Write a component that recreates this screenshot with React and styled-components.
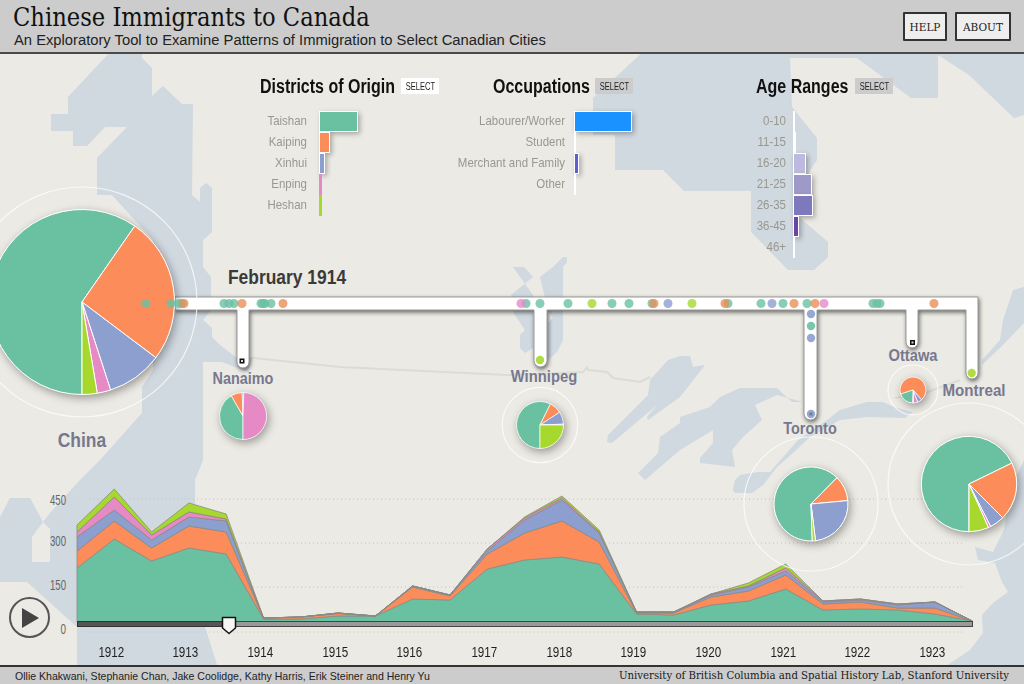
import React from "react";
import styled, { createGlobalStyle } from "styled-components";

const GOTHIC = `"Liberation Sans", sans-serif`;
const SLAB = `"DejaVu Serif Condensed", "DejaVu Serif", serif`;

const TEAL = "#6ac1a2";
const ORANGE = "#fc8d5a";
const BLUE = "#8d9fcf";
const PINK = "#e68ac6";
const GREEN = "#a6d82e";
const RAIL_ORANGE = "#e88f58";

const GlobalStyle = createGlobalStyle`
  html, body {
    margin: 0;
    padding: 0;
    background: #ebeae4;
  }
  #root {
    width: 1024px;
    height: 684px;
    overflow: hidden;
  }
`;

const Page = styled.div`
  display: flex;
  flex-direction: column;
  width: 1024px;
  height: 684px;
  font-family: "Liberation Sans", sans-serif;
`;

const Header = styled.header`
  display: flex;
  justify-content: space-between;
  align-items: flex-start;
  box-sizing: border-box;
  height: 54px;
  padding: 3px 13px 0 13px;
  background: #cccccc;
  border-bottom: 2px solid #4a4a4a;
`;

const Titles = styled.div`
  display: flex;
  flex-direction: column;
`;

const Title = styled.h1`
  margin: 0;
  font-family: ${SLAB};
  font-weight: 400;
  font-size: 25.2px;
  line-height: 29px;
  color: #111;
`;

const Subtitle = styled.p`
  margin: 0 0 0 1px;
  font-size: 14.76px;
  line-height: 17px;
  color: #222;
`;

const Nav = styled.nav`
  display: flex;
  gap: 8px;
  padding-top: 9px;
`;

const NavButton = styled.button`
  box-sizing: border-box;
  width: ${(p) => p.$width}px;
  height: 29px;
  padding: 0;
  background: #eeeeee;
  border: 2px solid #333;
  border-radius: 1px;
  font-family: "DejaVu Serif", serif;
  font-size: 10.5px;
  color: #222;
`;

const Stage = styled.main`
  position: relative;
  flex: 1;
  display: flex;
  flex-direction: column;
  justify-content: space-between;
  min-height: 0;
`;

const MapLayer = styled.svg`
  position: absolute;
  top: 0;
  left: 0;
  width: 1024px;
  height: 611px;
`;

const Filters = styled.section`
  position: relative;
  display: flex;
  padding: 21px 0 0 260px;
`;

const FilterPanel = styled.div`
  width: ${(p) => p.$width}px;
`;

const FilterHead = styled.div`
  display: flex;
  align-items: center;
  gap: ${(p) => p.$gap}px;
  height: 22px;
  margin-bottom: 14px;
`;

const FilterTitle = styled.h2`
  flex-shrink: 0;
  width: ${(p) => p.$width}px;
  margin: 0;
  font-family: ${GOTHIC};
  font-weight: 700;
  font-size: 19.5px;
  color: #111;
  white-space: nowrap;
  transform: scaleX(0.82);
  transform-origin: left center;
`;

const SelectButton = styled.button`
  display: flex;
  align-items: center;
  justify-content: center;
  width: 38px;
  height: 16px;
  padding: 0;
  border: 0;
  background: ${(p) => (p.$active ? "#ffffff" : "#cccccc")};
`;

const SelectText = styled.span`
  font-family: ${GOTHIC};
  font-size: 10.5px;
  color: #222;
  transform: scaleX(0.72);
`;

const FilterRow = styled.div`
  display: flex;
  align-items: stretch;
  height: 21px;
  gap: ${(p) => p.$gap}px;
`;

const RowLabel = styled.span`
  display: flex;
  justify-content: flex-end;
  align-items: center;
  box-sizing: border-box;
  width: ${(p) => p.$width}px;
  padding-bottom: 2px;
  font-family: ${GOTHIC};
  font-size: 13.5px;
  color: #98988f;
  white-space: nowrap;
  transform: scaleX(0.85);
  transform-origin: right center;
`;

const RowBar = styled.span`
  box-sizing: border-box;
  width: ${(p) => p.$width}px;
  background: ${(p) => p.$color};
  border: ${(p) => (p.$width > 3 ? "1px solid #fff" : "0")};
  box-shadow: ${(p) => (p.$width > 3 ? "2px 2px 5px rgba(0, 0, 0, 0.3)" : "none")};
`;

const Timeline = styled.section`
  position: relative;
`;

const ChartSvg = styled.svg`
  display: block;
  width: 1024px;
  height: 165px;
`;

const AxisText = styled.text`
  font-family: ${GOTHIC};
  font-size: 14px;
  fill: #666;
  text-anchor: end;
`;

const Years = styled.div`
  display: flex;
  box-sizing: border-box;
  height: 25px;
  padding: 4px 0 0 73.5px;
`;

const Year = styled.span`
  width: 74.7px;
  text-align: center;
  font-family: ${GOTHIC};
  font-size: 15.5px;
  line-height: 16px;
  color: #1f1f1f;
  transform: scaleX(0.75);
`;

const PlayButton = styled.button`
  position: absolute;
  left: 9px;
  top: 122px;
  width: 41px;
  height: 41px;
  padding: 0;
  border: 2px solid #555;
  border-radius: 50%;
  background: #ebeae4;
  display: flex;
  align-items: center;
  justify-content: center;
`;

const Overlay = styled.svg`
  position: absolute;
  top: 0;
  left: 0;
  width: 1024px;
  height: 611px;
  pointer-events: none;
`;

const Route = styled.path`
  fill: #ffffff;
  stroke: #999;
  stroke-width: 1;
  filter: drop-shadow(1px 2px 2px rgba(0, 0, 0, 0.55));
`;

const PieGroup = styled.g`
  filter: drop-shadow(2px 3px 4px rgba(0, 0, 0, 0.35));
`;

const MapLabel = styled.span`
  position: absolute;
  left: ${(p) => p.$x}px;
  top: ${(p) => p.$y}px;
  transform: translate(-50%, -50%) scaleX(${(p) => p.$scale});
  font-family: ${GOTHIC};
  font-weight: 700;
  font-size: ${(p) => p.$size}px;
  color: ${(p) => p.$color || "#77788e"};
  white-space: nowrap;
`;

const Footer = styled.footer`
  display: flex;
  justify-content: space-between;
  align-items: center;
  box-sizing: border-box;
  height: 19px;
  padding: 0 15px;
  background: #cccccc;
  border-top: 2px solid #333;
`;

const Credits = styled.span`
  font-size: 10.55px;
  color: #222;
`;

const Institution = styled.span`
  font-family: ${SLAB};
  font-size: 11.3px;
  color: #1a1a1a;
`;

const WATER = [
  "112,50 142,50 142,58 152,68 152,96 163,86 182,104 193,104 192,195 200,202 200,188 206,183 212,188 212,232 203,240 203,267 211,277 211,310 203,320 212,328 212,337 220,345 237,358 253,357 248,372 222,362 203,362 203,460 195,480 195,600 207,633 218,668 77,668 77,627 27,582 0,582 0,517 10,498 30,498 43,522 50,513 80,480 100,460 142,413 142,387 153,370 153,240 112,195 97,195 97,158 127,127 105,127 87,146 73,146 73,131 51,131 51,114 68,114 68,97",
  "645,50 593,98 593,135 615,135 615,170 663,170 684,191 751,191 751,232 788,270 814,270 828,257 828,242 799,217 812,200 809,172 817,160 817,138 792,107 790,58 857,58 911,98 938,98 938,55 969,75 1014,118 1024,115 1024,50",
  "513,267 524,267 533,277 511,295 513,312 525,330 520,335 520,348 525,353 533,348 533,295",
  "540,277 553,267 563,257 567,257 567,262 563,267 563,340 557,352 548,360 548,323 553,318 548,310",
  "668,360 650,380 648,395 608,435 607,442 612,443 657,405 647,417 648,420 680,397 705,365 693,367 690,356 680,356",
  "680,423 660,437 658,453 638,473 645,480 680,450 713,430 713,443 700,458 700,463 735,467 732,450 743,437 762,420 755,405 777,395 803,402 792,402 777,388 740,388 720,397 710,407 680,417",
  "733,490 735,480 740,475 758,472 770,472 798,440 827,420 840,410 867,402 883,402 897,408 913,412 905,418 867,417 840,420 810,437 793,453 777,467 763,485 752,493 735,493",
  "1024,287 1013,290 1003,320 1000,340 982,360 982,365 1005,343 1024,323",
  "1024,460 1010,490 1004,530 993,552 975,547 978,560 995,563 1002,582 1008,592 993,603 982,615 983,633 970,650 943,668 1024,668",
];

const ISLAND = "43,522 50,529 50,562 32,562 32,537";
const BORDER = "253,358 340,367 507,375 583,372 587,367 588,370 607,372 613,378 640,382 650,377";
const RIVER = "895,398 925,393 960,380";

const DISTRICTS = [
  ["Taishan", 39, TEAL],
  ["Kaiping", 11, ORANGE],
  ["Xinhui", 6, BLUE],
  ["Enping", 3, PINK],
  ["Heshan", 3, GREEN],
];

const OCCUPATIONS = [
  ["Labourer/Worker", 58, "#1a92ff"],
  ["Student", 2, "#ffffff"],
  ["Merchant and Family", 5, "#5d5dd6"],
  ["Other", 2, "#ffffff"],
];

const AGES = [
  ["0-10", 2, "#ffffff"],
  ["11-15", 3, "#ffffff"],
  ["16-20", 13, "#bdbadf"],
  ["21-25", 19, "#9e9ac8"],
  ["26-35", 20, "#7e78bd"],
  ["36-45", 6, "#6a45a8"],
  ["46+", 2, "#ffffff"],
];

const FILTERS = [
  { title: "Districts of Origin", titleWidth: 135, headGap: 6, rows: DISTRICTS, panel: 233, label: 47, gap: 12, active: true },
  { title: "Occupations", titleWidth: 95, headGap: 7, rows: OCCUPATIONS, panel: 263, label: 72, gap: 9 },
  { title: "Age Ranges", titleWidth: 91, headGap: 8, rows: AGES, panel: 268, label: 30, gap: 7 },
];

// top edge of each band per half year: teal, orange, blue, pink, green
const SERIES = [
  [568, 551, 537, 532, 525],
  [539, 521, 510, 497, 489],
  [561, 548, 540, 535, 532],
  [548, 526, 517, 512, 503],
  [554, 532, 521, 519, 514],
  [619, 618, 618, 618, 618],
  [619, 617, 617, 617, 617],
  [616, 613.5, 613, 613, 613],
  [616, 616, 616, 616, 616],
  [599, 587, 586, 586, 586],
  [600, 596, 595, 595, 595],
  [569, 554, 551, 549, 549],
  [560, 533, 520, 518, 517],
  [557, 521, 500, 498, 496],
  [564, 542, 533, 532, 530],
  [614, 613, 612, 612, 612],
  [615, 613, 612, 612, 612],
  [605, 597, 595, 594, 594],
  [601, 591, 587, 586, 583],
  [589, 575, 571, 568, 564],
  [610, 604, 602, 601, 601],
  [609, 602, 600, 599, 599],
  [610, 608, 605, 604, 604],
  [614, 608, 602, 602, 602],
  [621, 621, 621, 621, 621],
];

const BANDS = [TEAL, ORANGE, BLUE, PINK, GREEN];
const YEARS = [1912, 1913, 1914, 1915, 1916, 1917, 1918, 1919, 1920, 1921, 1922, 1923];
const GRID = [499, 543, 587, 632];
const AXIS = [["450", 505, 16], ["300", 546, 16], ["150", 590, 16], ["0", 634, 5.5]];

const PIES = [
  {
    cx: 82, cy: 302, r: 92.5, ring: 115,
    slices: [[180, 394.8, TEAL], [34.8, 127, ORANGE], [127, 162, BLUE], [162, 170.5, PINK], [170.5, 180, GREEN]],
  },
  {
    cx: 243, cy: 416, r: 23.5,
    slices: [[180, 330, TEAL], [330, 358, ORANGE], [358, 362, BLUE], [2, 180, PINK]],
  },
  {
    cx: 540, cy: 425, r: 23.5, ring: 37.7,
    slices: [[180, 386.5, TEAL], [26.5, 57, ORANGE], [57, 88, BLUE], [88, 90, PINK], [90, 180, GREEN]],
  },
  {
    cx: 811, cy: 504, r: 37, ring: 67,
    slices: [[178, 404.6, TEAL], [44.6, 84.7, ORANGE], [84.7, 173, BLUE], [173, 178, GREEN]],
  },
  {
    cx: 913, cy: 390, r: 13, ring: 25,
    slices: [[251.6, 499, ORANGE], [139, 159, BLUE], [159, 178, PINK], [178, 182, GREEN], [182, 251.6, TEAL]],
  },
  {
    cx: 969, cy: 484, r: 47.7, ring: 81,
    slices: [[180, 424, TEAL], [64, 135, ORANGE], [135, 153, BLUE], [153, 156, PINK], [156, 180, GREEN]],
  },
];

const RAIL_DOTS = [
  [146, TEAL], [171, TEAL], [179, TEAL], [182, TEAL], [184, RAIL_ORANGE],
  [224, TEAL], [229, TEAL], [234, TEAL], [242, RAIL_ORANGE],
  [261, TEAL], [263, TEAL], [265, TEAL], [271, TEAL], [283, RAIL_ORANGE],
  [526, TEAL], [521, PINK], [540, TEAL], [568, TEAL], [592, GREEN], [612, TEAL], [629, TEAL],
  [652, TEAL], [654, RAIL_ORANGE], [668, BLUE], [692, GREEN], [728, TEAL], [725, RAIL_ORANGE],
  [761, TEAL], [772, BLUE], [783, TEAL], [794, RAIL_ORANGE], [807, TEAL], [815, RAIL_ORANGE], [824, PINK],
  [873, TEAL], [877, TEAL], [880, TEAL], [934, RAIL_ORANGE],
];

const BRANCH_DOTS = [
  [811, 314, BLUE], [811, 326, TEAL], [811, 338, BLUE], [811, 414, BLUE],
  [540, 360, GREEN], [971.7, 373, GREEN],
];

const ROUTE =
  "M175,297 H978 V373 a6,6 0 0 1 -12,0 V310 H918 V342 a6,6 0 0 1 -12,0 V310 H817 V413.5 a6.5,6.5 0 0 1 -13,0 V310 H547 V360.5 a6.5,6.5 0 0 1 -13,0 V310 H249 V362 a6,6 0 0 1 -12,0 V310 H175 Z";

const polar = (cx, cy, r, deg) => {
  const a = (deg * Math.PI) / 180;
  return `${(cx + r * Math.sin(a)).toFixed(2)},${(cy - r * Math.cos(a)).toFixed(2)}`;
};

const slicePath = (cx, cy, r, from, to) => {
  const large = to - from > 180 ? 1 : 0;
  return `M${cx},${cy} L${polar(cx, cy, r, from)} A${r},${r} 0 ${large} 1 ${polar(cx, cy, r, to)} Z`;
};

const Pie = ({ cx, cy, r, ring, slices }) => (
  <g>
    {ring && <circle cx={cx} cy={cy} r={ring} fill="none" stroke="#ffffff" strokeOpacity="0.75" strokeWidth="1.2" />}
    <PieGroup>
      <circle cx={cx} cy={cy} r={r} fill="#ffffff" />
      {slices.map(([from, to, color]) => (
        <path
          key={from}
          d={slicePath(cx, cy, r, from, to)}
          fill={color}
          stroke="#ffffff"
          strokeWidth={r > 30 ? 1 : 0.7}
          strokeLinejoin="round"
        />
      ))}
    </PieGroup>
  </g>
);

const Marker = ({ x, y }) => (
  <g>
    <rect x={x - 2.5} y={y - 2.5} width="5" height="5" fill="#111" />
    <rect x={x - 1} y={y - 1} width="2" height="2" fill="#ddd" />
  </g>
);

const bandPath = (band) => {
  const xAt = (i) => 77 + 37.3 * i;
  const top = SERIES.map((row, i) => `${xAt(i).toFixed(1)},${row[band]}`);
  const bottom = SERIES.map((row, i) => `${xAt(i).toFixed(1)},${band === 0 ? 622 : row[band - 1]}`).reverse();
  return `M${top.join(" L")} L${bottom.join(" L")} Z`;
};

const Filter = ({ title, titleWidth, headGap, rows, panel, label, gap, active }) => (
  <FilterPanel $width={panel}>
    <FilterHead $gap={headGap}>
      <FilterTitle $width={titleWidth}>{title}</FilterTitle>
      <SelectButton $active={active}>
        <SelectText>SELECT</SelectText>
      </SelectButton>
    </FilterHead>
    {rows.map(([name, width, color]) => (
      <FilterRow key={name} $gap={gap}>
        <RowLabel $width={label}>{name}</RowLabel>
        <RowBar $width={width} $color={color} />
      </FilterRow>
    ))}
  </FilterPanel>
);

const App = () => (
  <>
    <GlobalStyle />
    <Page>
      <Header>
        <Titles>
          <Title>Chinese Immigrants to Canada</Title>
          <Subtitle>An Exploratory Tool to Examine Patterns of Immigration to Select Canadian Cities</Subtitle>
        </Titles>
        <Nav>
          <NavButton $width={44}>HELP</NavButton>
          <NavButton $width={56}>ABOUT</NavButton>
        </Nav>
      </Header>

      <Stage>
        <MapLayer viewBox="0 54 1024 611">
          <rect x="0" y="54" width="1024" height="611" fill="#ebeae4" />
          {WATER.map((points) => (
            <polygon key={points} points={points} fill="#d0d8e0" />
          ))}
          <polygon points={ISLAND} fill="#ebeae4" />
          <polyline points={BORDER} fill="none" stroke="#dcdcd3" strokeWidth="2" />
          <polyline points={RIVER} fill="none" stroke="#dcdcd3" strokeWidth="2" />
        </MapLayer>

        <Filters>
          {FILTERS.map((filter) => (
            <Filter key={filter.title} {...filter} />
          ))}
        </Filters>

        <Timeline>
          <ChartSvg viewBox="0 475 1024 165">
            {GRID.map((y) => (
              <line key={y} x1="85" x2="965" y1={y} y2={y} stroke="#c4c4bd" strokeWidth="1" strokeDasharray="1 3" />
            ))}
            {AXIS.map(([text, y, width]) => (
              <AxisText key={text} x="66" y={y} textLength={width} lengthAdjust="spacingAndGlyphs">{text}</AxisText>
            ))}
            {BANDS.map((color, band) => (
              <path key={color} d={bandPath(band)} fill={color} stroke="#8a8a84" strokeWidth="0.8" strokeLinejoin="round" />
            ))}
            <rect x="77.5" y="621.5" width="895" height="5" fill="#999" stroke="#444" />
            <rect x="77.5" y="621.5" width="151" height="5" fill="#555" stroke="#333" />
            <path d="M222.5,617.5 H235.5 V628 L229,633.5 L222.5,628 Z" fill="#f6f6f6" stroke="#111" strokeWidth="1.5" strokeLinejoin="round" />
          </ChartSvg>
          <Years>
            {YEARS.map((year) => (
              <Year key={year}>{year}</Year>
            ))}
          </Years>
          <PlayButton aria-label="Play">
            <svg width="20" height="22" viewBox="0 0 20 22">
              <path d="M2,1 L19,11 L2,21 Z" fill="#444" />
            </svg>
          </PlayButton>
        </Timeline>

        <Overlay viewBox="0 54 1024 611">
          <Route d={ROUTE} />
          {PIES.map((pie) => (
            <Pie key={pie.cx} {...pie} />
          ))}
          {RAIL_DOTS.map(([x, color], i) => (
            <circle key={i} cx={x} cy="303.5" r="4.5" fill={color} fillOpacity="0.8" />
          ))}
          {BRANCH_DOTS.map(([x, y, color]) => (
            <circle key={`${x}-${y}`} cx={x} cy={y} r="4.2" fill={color} fillOpacity="0.9" />
          ))}
          <rect x="809.5" y="412.5" width="3" height="3" fill="#444" fillOpacity="0.45" />
          <Marker x={242} y={361} />
          <Marker x={912.5} y={342.5} />
        </Overlay>

        <MapLabel $x={287} $y={223} $size={21} $scale={0.83} $color="#3a3a3a">February 1914</MapLabel>
        <MapLabel $x={82} $y={386} $size={21} $scale={0.83}>China</MapLabel>
        <MapLabel $x={243} $y={325} $size={16} $scale={0.9}>Nanaimo</MapLabel>
        <MapLabel $x={544} $y={323} $size={17} $scale={0.87}>Winnipeg</MapLabel>
        <MapLabel $x={810} $y={375} $size={17} $scale={0.85}>Toronto</MapLabel>
        <MapLabel $x={913} $y={302} $size={16} $scale={0.92}>Ottawa</MapLabel>
        <MapLabel $x={974} $y={337} $size={17} $scale={0.89}>Montreal</MapLabel>
      </Stage>

      <Footer>
        <Credits>Ollie Khakwani, Stephanie Chan, Jake Coolidge, Kathy Harris, Erik Steiner and Henry Yu</Credits>
        <Institution>University of British Columbia and Spatial History Lab, Stanford University</Institution>
      </Footer>
    </Page>
  </>
);

export default App;
